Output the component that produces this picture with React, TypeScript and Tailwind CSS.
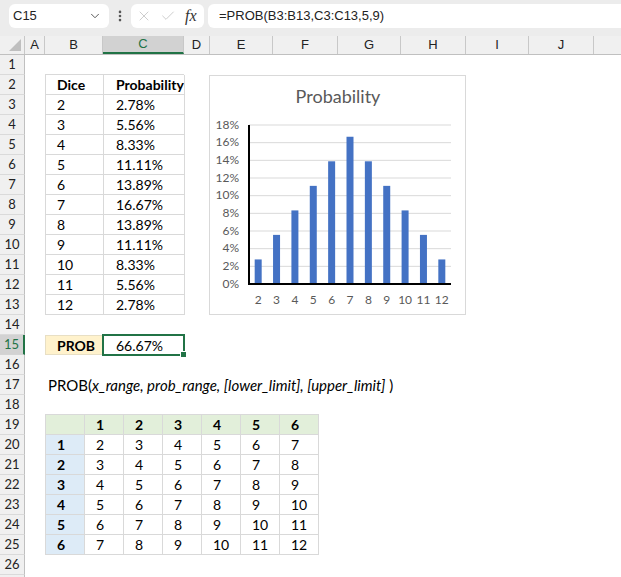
import { ChevronDown, X, Check, EllipsisVertical } from "lucide-react";

const dice = [
  ["2", "2.78%"],
  ["3", "5.56%"],
  ["4", "8.33%"],
  ["5", "11.11%"],
  ["6", "13.89%"],
  ["7", "16.67%"],
  ["8", "13.89%"],
  ["9", "11.11%"],
  ["10", "8.33%"],
  ["11", "5.56%"],
  ["12", "2.78%"],
];

const probs = [2.78, 5.56, 8.33, 11.11, 13.89, 16.67, 13.89, 11.11, 8.33, 5.56, 2.78];

const columns = [
  { name: "A", w: "w-[20px]" },
  { name: "B", w: "w-[58px]" },
  { name: "C", w: "w-[81px]" },
  { name: "D", w: "w-[26px]" },
  { name: "E", w: "w-[63px]" },
  { name: "F", w: "w-[65px]" },
  { name: "G", w: "w-[63px]" },
  { name: "H", w: "w-[65px]" },
  { name: "I", w: "w-[63px]" },
  { name: "J", w: "w-[65px]" },
  { name: "", w: "w-[65px]" },
];

const Chart = () => {
  const x0 = 39;
  const x1 = 241;
  const y0 = 208;
  const h = 159;
  const step = (x1 - x0) / 11;

  return (
    <div className="col-start-5 col-span-4 row-start-2 row-span-12 -ml-px border border-[#d9d9d9] bg-white">
      <svg width="256" height="238" className="block">
        <text x="128" y="22" textAnchor="middle" dominantBaseline="middle" fontSize="18" fill="#595959">
          Probability
        </text>
        {/* gridlines + y labels */}
        {Array.from({ length: 10 }).map((_, k) => {
          const y = y0 - (k * h) / 9;
          return (
            <g key={k}>
              {k > 0 && <line x1={x0} x2={x1} y1={y} y2={y} stroke="#d9d9d9" strokeWidth="1" />}
              <text x="29" y={y + 0.5} textAnchor="end" dominantBaseline="middle" fontSize="12" fill="#595959">
                {k * 2}%
              </text>
            </g>
          );
        })}
        {/* bars */}
        {probs.map((p, i) => {
          const bh = (p / 18) * h;
          const cx = x0 + (i + 0.5) * step;
          return <rect key={i} x={cx - 3.5} y={y0 - bh} width="7" height={bh} fill="#4472c4" />;
        })}
        {/* axes */}
        <line x1={x0} x2={x0} y1={y0 - h} y2={y0 + 1} stroke="#000" strokeWidth="2" />
        <line x1={x0 - 1} x2={x1} y1={y0} y2={y0} stroke="#000" strokeWidth="2" />
        {/* x labels */}
        {probs.map((_, i) => (
          <text
            key={i}
            x={x0 + (i + 0.5) * step}
            y="225"
            textAnchor="middle"
            dominantBaseline="middle"
            fontSize="12"
            fill="#595959"
          >
            {i + 2}
          </text>
        ))}
      </svg>
    </div>
  );
};

const App = () => {
  return (
    <div className="w-[621px] h-[577px] overflow-hidden bg-white font-['Lato',sans-serif] text-black">
      {/* Formula bar */}
      <div className="h-[36px] bg-[#ececec] flex items-start pt-[4px]">
        <div className="ml-[9px] w-[100px] h-[24px] bg-white rounded-md flex items-center justify-between pl-[4px] pr-[7px]">
          <span className="font-['Liberation_Sans',sans-serif] text-[13px] text-[#222]">C15</span>
          <ChevronDown size={14} strokeWidth={1.5} className="text-[#444]" />
        </div>
        <div className="w-[22px] h-[24px] flex items-center justify-center">
          <EllipsisVertical size={14} strokeWidth={2.5} className="text-[#555]" />
        </div>
        <div className="w-[73px] h-[24px] bg-white rounded-md flex items-center pl-[5px] gap-[8px]">
          <X size={16} strokeWidth={1} className="text-[#b4b4b4]" />
          <Check size={16} strokeWidth={1} className="text-[#b4b4b4]" />
          <span className="font-['Liberation_Serif',serif] italic text-[16px] text-[#333] ml-[1px]">fx</span>
        </div>
        <div className="ml-[4px] flex-1 h-[24px] bg-white rounded-l-md flex items-center pl-[11px]">
          <span className="font-['Liberation_Sans',sans-serif] text-[13px] text-[#222]">=PROB(B3:B13,C3:C13,5,9)</span>
        </div>
      </div>

      {/* Column headers */}
      <div className="flex h-[19px] bg-[#f0f0f0] border-b border-[#c0c0c0] font-['Liberation_Sans',sans-serif] text-[13px] text-[#222]">
        <div className="w-[25px] shrink-0 border-r border-[#c8c8c8] flex items-end justify-end pr-[3px] pb-[3px]">
          <svg width="12" height="12" viewBox="0 0 12 12">
            <polygon points="12,0 12,12 0,12" fill="#bfbfbf" />
          </svg>
        </div>
        {columns.map((c, i) => (
          <div
            key={i}
            className={
              c.name === "C"
                ? `${c.w} shrink-0 border-r border-[#c8c8c8] bg-[#d2d2d2] text-[#217346] border-b-2 border-b-[#217346] flex items-center justify-center`
                : `${c.w} shrink-0 border-r border-[#c8c8c8] flex items-center justify-center`
            }
          >
            {c.name}
          </div>
        ))}
      </div>

      <div className="flex">
        {/* Row headers */}
        <div className="w-[25px] shrink-0 flex flex-col text-[13px] text-[#222]">
          {Array.from({ length: 27 }).map((_, i) =>
            i === 14 ? (
              <div
                key={i}
                className="h-5 bg-[#d2d2d2] border-b border-[#d4d4d4] border-r-2 border-r-[#217346] text-[#217346] flex items-center justify-center"
              >
                {i + 1}
              </div>
            ) : (
              <div
                key={i}
                className="h-5 bg-[#f0f0f0] border-b border-[#dadada] border-r border-r-[#c0c0c0] flex items-center justify-center"
              >
                {i < 26 ? i + 1 : ""}
              </div>
            )
          )}
        </div>

        {/* Sheet */}
        <div className="grid grid-cols-[20px_58px_81px_26px_63px_65px_63px_65px_63px_65px_1fr] grid-rows-[repeat(27,20px)] flex-1 text-[14px]">
          {/* Dice table */}
          <div className="col-start-2 col-span-2 row-start-2 row-span-12 grid grid-cols-[58px_81px] grid-rows-[repeat(12,20px)] border-l border-t border-[#d9d9d9] -mt-px h-[241px]">
            <div className="border-r border-b border-[#d9d9d9] pl-[11px] flex items-center font-bold">Dice</div>
            <div className="border-r border-b border-[#d9d9d9] pl-[12px] flex items-center font-bold whitespace-nowrap overflow-hidden">
              Probability
            </div>
            {dice.map(([d, p]) => (
              <>
                <div key={`d${d}`} className="border-r border-b border-[#d9d9d9] pl-[11px] flex items-center">
                  {d}
                </div>
                <div key={`p${d}`} className="border-r border-b border-[#d9d9d9] pl-[12px] flex items-center">
                  {p}
                </div>
              </>
            ))}
          </div>

          <Chart />

          {/* PROB result */}
          <div className="col-start-2 row-start-15 bg-[#fff2cc] border border-[#e8dfc4] pl-[11px] flex items-center font-bold">
            PROB
          </div>
          <div className="col-start-3 row-start-15 -m-px relative border-2 border-[#217346] pl-[12px] flex items-center">
            66.67%
            <div className="absolute -right-[4px] -bottom-[4px] w-[7px] h-[7px] bg-[#217346] border border-white" />
          </div>

          {/* Syntax */}
          <div className="col-start-2 col-span-9 row-start-17 pl-[3px] flex items-center whitespace-nowrap text-[15px]">
            PROB(<i>x_range, prob_range, [lower_limit], [upper_limit]</i>&nbsp;)
          </div>

          {/* Sum matrix */}
          <div className="col-start-2 col-span-8 row-start-19 row-span-7 w-max grid grid-cols-[repeat(7,39px)] grid-rows-[repeat(7,20px)] border-l border-t border-[#d9d9d9] -mt-px">
            <div className="bg-[#e2efda] border-r border-b border-[#d9d9d9]" />
            {[1, 2, 3, 4, 5, 6].map((n) => (
              <div key={`h${n}`} className="bg-[#e2efda] border-r border-b border-[#d9d9d9] pl-[11px] flex items-center font-bold">
                {n}
              </div>
            ))}
            {[1, 2, 3, 4, 5, 6].map((r) => (
              <>
                <div key={`r${r}`} className="bg-[#ddebf7] border-r border-b border-[#d9d9d9] pl-[11px] flex items-center font-bold">
                  {r}
                </div>
                {[1, 2, 3, 4, 5, 6].map((c) => (
                  <div key={`c${r}-${c}`} className="border-r border-b border-[#d9d9d9] pl-[11px] flex items-center">
                    {r + c}
                  </div>
                ))}
              </>
            ))}
          </div>
        </div>
      </div>
    </div>
  );
};

export default App;
